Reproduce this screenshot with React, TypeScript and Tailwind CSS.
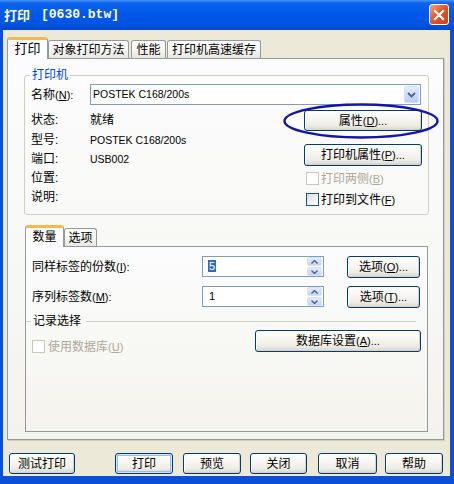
import React from "react";

type BtnProps = { children: React.ReactNode; className?: string; def?: boolean };

function Btn({ children, className = "", def = false }: BtnProps) {
  return (
    <div
      className={`flex shrink-0 items-center justify-center rounded-[3px] border border-[#003C74] bg-[linear-gradient(to_bottom,#FFFFFF_0%,#F8F7F3_35%,#EEEDE7_75%,#DAD5CB_100%)] text-[12px] leading-[14px] text-black ${
        def
          ? "shadow-[inset_0_0_0_1px_#CEE7FF,inset_0_0_0_2px_#9DBBEA]"
          : "shadow-[inset_-1px_-1px_0_#D8D2C6,inset_1px_1px_0_#FFFFFF]"
      } ${className}`}
    >
      {children}
    </div>
  );
}

function Mn({ pre = "(", k, post = ")..." }: { pre?: string; k: string; post?: string }) {
  return (
    <span className="text-[11px] leading-[14px]">
      {pre}
      <span className="underline underline-offset-[1px]">{k}</span>
      {post}
    </span>
  );
}

function Check({ disabled = false }: { disabled?: boolean }) {
  return (
    <div
      className={`h-[13px] w-[13px] shrink-0 border ${
        disabled
          ? "border-[#CAC8BB] bg-white"
          : "border-[#1C5180] bg-[linear-gradient(135deg,#DCDCD7_0%,#F2F2EF_60%,#FFFFFF_100%)]"
      }`}
    />
  );
}

function TabSel({ children, w, text = "text-[12px]" }: { children: React.ReactNode; w: string; text?: string }) {
  return (
    <div
      className={`relative z-10 mb-[-1px] flex h-[22px] ${w} shrink-0 items-center justify-center rounded-t-[3px] border border-b-0 border-[#919B9C] border-t-[3px] border-t-[#F7B84B] bg-[#FCFCFE] pb-[1px] ${text} leading-[14px]`}
    >
      {children}
    </div>
  );
}

function Tab({ children, w, ml = "" }: { children: React.ReactNode; w: string; ml?: string }) {
  return (
    <div
      className={`flex h-[18px] ${w} ${ml} shrink-0 items-center justify-center rounded-t-[3px] border border-b-0 border-[#919B9C] bg-[linear-gradient(to_bottom,#FFFFFF_0%,#F6F5F1_50%,#E8E7E0_100%)] text-[12px] leading-[14px]`}
    >
      {children}
    </div>
  );
}

function SpinArrow({ up }: { up: boolean }) {
  return (
    <div className="flex h-[9px] w-[15px] items-center justify-center rounded-[2px] border border-[#D7E1F8] bg-[linear-gradient(to_bottom,#E3EBFD,#C3D3F8)]">
      <svg width="7" height="4" viewBox="0 0 7 4">
        <path
          d={up ? "M0.5 3.5 L3.5 0.5 L6.5 3.5" : "M0.5 0.5 L3.5 3.5 L6.5 0.5"}
          fill="none"
          stroke="#4D6185"
          strokeWidth="1.4"
        />
      </svg>
    </div>
  );
}

function Spinner({ children }: { children: React.ReactNode }) {
  return (
    <div className="flex h-[21px] w-[122px] shrink-0 items-center border border-[#7F9DB9] bg-white">
      <div className="pl-[5px] text-[11px] leading-[13px]">{children}</div>
      <div className="ml-auto mr-[1px] flex flex-col gap-[1px]">
        <SpinArrow up />
        <SpinArrow up={false} />
      </div>
    </div>
  );
}

export default function App() {
  return (
    <div className="relative h-[484px] w-[454px] overflow-hidden bg-[#0B4FD8] font-['Liberation_Sans','Noto_Sans_CJK_SC',sans-serif] text-black">
      {/* title bar */}
      <div className="flex h-[30px] items-center bg-[linear-gradient(to_bottom,#4A93F8_0%,#0C64EE_10%,#0058E8_45%,#0055E2_80%,#0047C8_100%)] pl-[4px] pr-[5px]">
        <span className="font-['Noto_Sans_CJK_SC',sans-serif] text-[13px] font-bold leading-[16px] text-white">
          打印
        </span>
        <span className="ml-[11px] font-['Liberation_Mono',monospace] text-[13px] font-bold leading-[16px] text-white">
          [0630.btw]
        </span>
        <div className="ml-auto mt-[-1px] flex h-[21px] w-[20px] items-center justify-center rounded-[3px] border border-white bg-[linear-gradient(135deg,#F4A384_0%,#E2582F_45%,#C9401A_100%)]">
          <svg width="12" height="12" viewBox="0 0 12 12">
            <path d="M2 2 L10 10 M10 2 L2 10" stroke="white" strokeWidth="2.2" strokeLinecap="square" />
          </svg>
        </div>
      </div>

      {/* window body */}
      <div className="ml-[3px] flex h-[446px] w-[447px] flex-col bg-[#ECE9D8] pt-[7px]">
        {/* top tabs */}
        <div className="ml-[4px] flex h-[21px] items-end">
          <TabSel w="w-[41px]" text="text-[13px]">
            打印
          </TabSel>
          <Tab w="w-[81px]">对象打印方法</Tab>
          <Tab w="w-[35px]" ml="ml-[2px]">
            性能
          </Tab>
          <Tab w="w-[94px]" ml="ml-[1px]">
            打印机高速缓存
          </Tab>
        </div>

        {/* main panel */}
        <div className="ml-[4px] flex h-[382px] w-[437px] flex-col border border-[#919B9C] bg-[linear-gradient(to_bottom,#FCFCFE_0%,#F8F8F5_50%,#F3F2ED_100%)] shadow-[1px_1px_0_#D0CEBF]">
          {/* printer group */}
          <div className="relative ml-[16px] mt-[16px] h-[140px] w-[405px] rounded-[3px] border border-[#D0D0BF]">
            <span className="absolute left-[5px] top-[-8px] bg-[#FCFCFD] px-[2px] text-[12px] leading-[14px] text-[#0046D5]">
              打印机
            </span>

            <div className="mt-[8px] flex items-center pl-[6px]">
              <div className="w-[59px] text-[12px] leading-[14px]">
                名称<Mn k="N" post="):" />
              </div>
              <div className="flex h-[21px] w-[331px] items-center border border-[#7F9DB9] bg-white">
                <span className="pl-[2px] text-[10.5px] leading-[13px]">POSTEK C168/200s</span>
                <div className="ml-auto mr-[1px] flex h-[17px] w-[15px] items-center justify-center rounded-[2px] border border-[#D2DEFA] bg-[linear-gradient(to_bottom,#E3EBFE,#B9CDF9)]">
                  <svg width="9" height="6" viewBox="0 0 9 6">
                    <path d="M1 1 L4.5 4.5 L8 1" fill="none" stroke="#4D6185" strokeWidth="1.8" />
                  </svg>
                </div>
              </div>
            </div>

            <div className="mt-[5px] flex">
              <div className="flex flex-col pl-[6px] text-[12px] leading-[14px]">
                <div className="flex h-[19px] items-center">
                  <span className="w-[59px]">状态:</span>
                  <span>就绪</span>
                </div>
                <div className="flex h-[21px] items-center">
                  <span className="w-[59px]">型号:</span>
                  <span className="text-[10.5px]">POSTEK C168/200s</span>
                </div>
                <div className="flex h-[18px] items-center">
                  <span className="w-[59px]">端口:</span>
                  <span className="text-[10.5px]">USB002</span>
                </div>
                <div className="flex h-[19px] items-center">
                  <span className="w-[59px]">位置:</span>
                </div>
                <div className="flex h-[20px] items-center">
                  <span className="w-[59px]">说明:</span>
                </div>
              </div>

              <div className="ml-auto mr-[6px] flex w-[118px] flex-col">
                <Btn className="h-[21px] w-[118px]">
                  属性<Mn k="D" />
                </Btn>
                <Btn className="mt-[13px] h-[22px] w-[118px]">
                  打印机属性<Mn k="P" />
                </Btn>
                <div className="mt-[6px] flex h-[13px] items-center pl-[2px]">
                  <Check disabled />
                  <span className="ml-[2px] text-[12px] leading-[14px] text-[#ACA899]">
                    打印两侧<Mn k="B" post=")" />
                  </span>
                </div>
                <div className="mt-[8px] flex h-[13px] items-center pl-[2px]">
                  <Check />
                  <span className="ml-[2px] text-[12px] leading-[14px]">
                    打印到文件<Mn k="F" post=")" />
                  </span>
                </div>
              </div>
            </div>
          </div>

          {/* inner tabs */}
          <div className="ml-[17px] mt-[10px] flex h-[21px] items-end">
            <TabSel w="w-[39px]">数量</TabSel>
            <Tab w="w-[33px]">选项</Tab>
          </div>
          <div className="ml-[17px] flex h-[186px] w-[403px] flex-col border border-[#919B9C] bg-[linear-gradient(to_bottom,#FCFCFE_0%,#F8F8F5_50%,#F4F3EE_100%)]">
            <div className="mt-[9px] flex h-[22px] items-start pl-[6px]">
              <div className="flex h-[22px] w-[170px] items-center text-[12px] leading-[14px]">
                同样标签的份数<Mn k="I" post="):" />
              </div>
              <Spinner>
                <span className="bg-[#316AC5] px-[1px] text-white">5</span>
              </Spinner>
              <Btn className="ml-[23px] h-[22px] w-[73px]">
                选项<Mn k="O" />
              </Btn>
            </div>
            <div className="mt-[8px] flex h-[22px] items-start pl-[6px]">
              <div className="flex h-[22px] w-[170px] items-center text-[12px] leading-[14px]">
                序列标签数<Mn k="M" post="):" />
              </div>
              <Spinner>
                <span className="px-[1px]">1</span>
              </Spinner>
              <Btn className="ml-[23px] h-[22px] w-[73px]">
                选项<Mn k="T" />
              </Btn>
            </div>
            <div className="mt-[6px] flex h-[14px] items-center">
              <div className="h-px w-[5px] bg-[#D0D0BF]" />
              <span className="ml-[2px] text-[12px] leading-[14px]">记录选择</span>
              <div className="ml-[5px] h-px w-[330px] bg-[#D0D0BF]" />
            </div>
            <div className="mt-[2px] flex items-start pl-[6px]">
              <div className="mt-[10px] flex h-[13px] items-center">
                <Check disabled />
                <span className="ml-[3px] text-[12px] leading-[14px] text-[#ACA899]">
                  使用数据库<Mn k="U" post=")" />
                </span>
              </div>
              <Btn className="ml-auto mr-[6px] h-[22px] w-[166px]">
                数据库设置<Mn k="A" />
              </Btn>
            </div>
          </div>
        </div>

        {/* bottom buttons */}
        <div className="mt-[13px] flex">
          <Btn className="ml-[6px] h-[21px] w-[66px]">测试打印</Btn>
          <Btn def className="ml-[40px] h-[21px] w-[58px]">
            打印
          </Btn>
          <Btn className="ml-[10px] h-[21px] w-[58px]">预览</Btn>
          <Btn className="ml-[9px] h-[21px] w-[57px]">关闭</Btn>
          <Btn className="ml-[11px] h-[21px] w-[59px]">取消</Btn>
          <Btn className="ml-[8px] h-[21px] w-[58px]">帮助</Btn>
        </div>
      </div>

      {/* hand-drawn highlight ellipse */}
      <svg className="pointer-events-none absolute left-[282px] top-[102px]" width="158" height="38" viewBox="0 0 158 38">
        <ellipse cx="79" cy="19" rx="76.5" ry="16.5" fill="none" stroke="#1414A8" strokeWidth="2.4" />
      </svg>
    </div>
  );
}
